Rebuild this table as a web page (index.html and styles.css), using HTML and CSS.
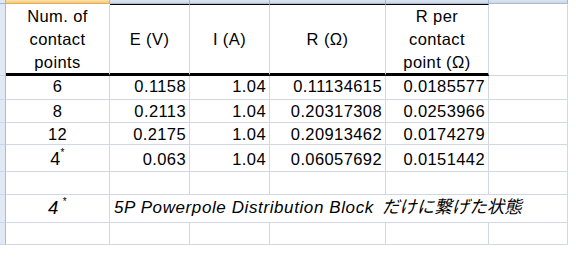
FILE: index.html
```html
<!DOCTYPE html>
<html lang="ja">
<head>
<meta charset="utf-8">
<title>Contact resistance</title>
<link rel="stylesheet" href="styles.css">
</head>
<body>
<div class="sheet">
  <div class="corner"></div>
  <div class="colhead sel"></div>
  <div class="colhead"></div>
  <div class="colhead"></div>
  <div class="colhead"></div>
  <div class="colhead"></div>
  <div class="colhead"></div>

  <div class="rh"></div>
  <div class="c h first"><span>Num. of<br>contact<br>points</span></div>
  <div class="c h"><span>E (V)</span></div>
  <div class="c h"><span>I (A)</span></div>
  <div class="c h"><span>R (Ω)</span></div>
  <div class="c h"><span>R per<br>contact<br>point (Ω)</span></div>
  <div class="c hb"></div>

  <div class="rh"></div>
  <div class="c ctr r6"><span>6</span></div>
  <div class="c num r6"><span>0.1158</span></div>
  <div class="c num r6"><span>1.04</span></div>
  <div class="c num r6"><span>0.11134615</span></div>
  <div class="c num r6"><span>0.0185577</span></div>
  <div class="c r6"></div>

  <div class="rh"></div>
  <div class="c ctr r8"><span>8</span></div>
  <div class="c num r8"><span>0.2113</span></div>
  <div class="c num r8"><span>1.04</span></div>
  <div class="c num r8"><span>0.20317308</span></div>
  <div class="c num r8"><span>0.0253966</span></div>
  <div class="c r8"></div>

  <div class="rh"></div>
  <div class="c ctr r12"><span>12</span></div>
  <div class="c num r12"><span>0.2175</span></div>
  <div class="c num r12"><span>1.04</span></div>
  <div class="c num r12"><span>0.20913462</span></div>
  <div class="c num r12"><span>0.0174279</span></div>
  <div class="c r12"></div>

  <div class="rh"></div>
  <div class="c ctr r4"><span><span class="big">4</span><sup>*</sup></span></div>
  <div class="c num r4"><span>0.063</span></div>
  <div class="c num r4"><span>1.04</span></div>
  <div class="c num r4"><span>0.06057692</span></div>
  <div class="c num r4"><span>0.0151442</span></div>
  <div class="c r4"></div>

  <div class="rh"></div>
  <div class="c"></div>
  <div class="c"></div>
  <div class="c"></div>
  <div class="c"></div>
  <div class="c"></div>
  <div class="c"></div>

  <div class="rh"></div>
  <div class="c ctr r5p"><span><span class="big2">4</span><sup class="gap">*</sup></span></div>
  <div class="c r5p note"><span>5P Powerpole Distribution Block<span class="jp">だけに繋げた状態</span></span></div>

  <div class="rh"></div>
  <div class="c"></div>
  <div class="c"></div>
  <div class="c"></div>
  <div class="c"></div>
  <div class="c"></div>
  <div class="c"></div>
</div>
</body>
</html>
```

FILE: styles.css
```css
* {
  box-sizing: border-box;
}

body {
  margin: 0;
  background: #ffffff;
  color: #000000;
  font-family: "Liberation Sans", Arial, sans-serif;
  font-size: 16.5px;
  letter-spacing: 0.4px;
}

.sheet {
  display: grid;
  width: 568px;
  grid-template-columns: 6px 104px 80px 80px 116px 103px 79px;
  grid-template-rows: 4px 72px 24px 23px 22px 27px 23px 28px 22px;
}

.corner {
  background: #dfe8f4;
  border-right: 1px solid #9eb6ce;
  border-bottom: 1px solid #9eb6ce;
}

.colhead {
  background: linear-gradient(#dde6f1, #c9d6e8);
  border-right: 1px solid #9eb6ce;
  border-bottom: 1px solid #a9bdd6;
}

.colhead.sel {
  background: linear-gradient(#fbe3b0, #f4c874);
  border-bottom-color: #e2ae56;
}

.rh {
  background: #e1e9f5;
  border-right: 1px solid #a9bcd4;
  border-bottom: 1px solid #c9d6e7;
}

.c {
  display: flex;
  align-items: flex-end;
  border-right: 1px solid #d0d7e5;
  border-bottom: 1px solid #d0d7e5;
  padding: 0 3px 3px;
  line-height: 18px;
  white-space: nowrap;
}

.num {
  justify-content: flex-end;
}

.ctr {
  justify-content: center;
}

.h {
  align-items: center;
  justify-content: center;
  text-align: center;
  line-height: 23px;
  padding: 0;
  border-top: 1px solid #000000;
  border-bottom: 3px solid #000000;
}

.h.first {
  border-top-color: transparent;
}

.hb {
  border-top: 1px solid transparent;
}

.r6 { padding-bottom: 4px; }
.r8 { padding-bottom: 2px; }
.r12 { padding-bottom: 1px; }
.r4 { padding-bottom: 3px; }
.r5p { padding-bottom: 5px; font-style: italic; }

.big {
  font-size: 18px;
}

.big2 {
  font-size: 18.5px;
}

sup {
  font-size: 10px;
  line-height: 0;
  vertical-align: 9px;
  font-style: normal;
}

sup.gap {
  margin-left: 4px;
}

.note {
  grid-column: span 5;
  padding-left: 4px;
  font-size: 17px;
  letter-spacing: 0.6px;
}

.jp {
  margin-left: 8px;
  font-family: "Noto Sans CJK JP", sans-serif;
  font-size: 17.5px;
  letter-spacing: 0;
}
```
